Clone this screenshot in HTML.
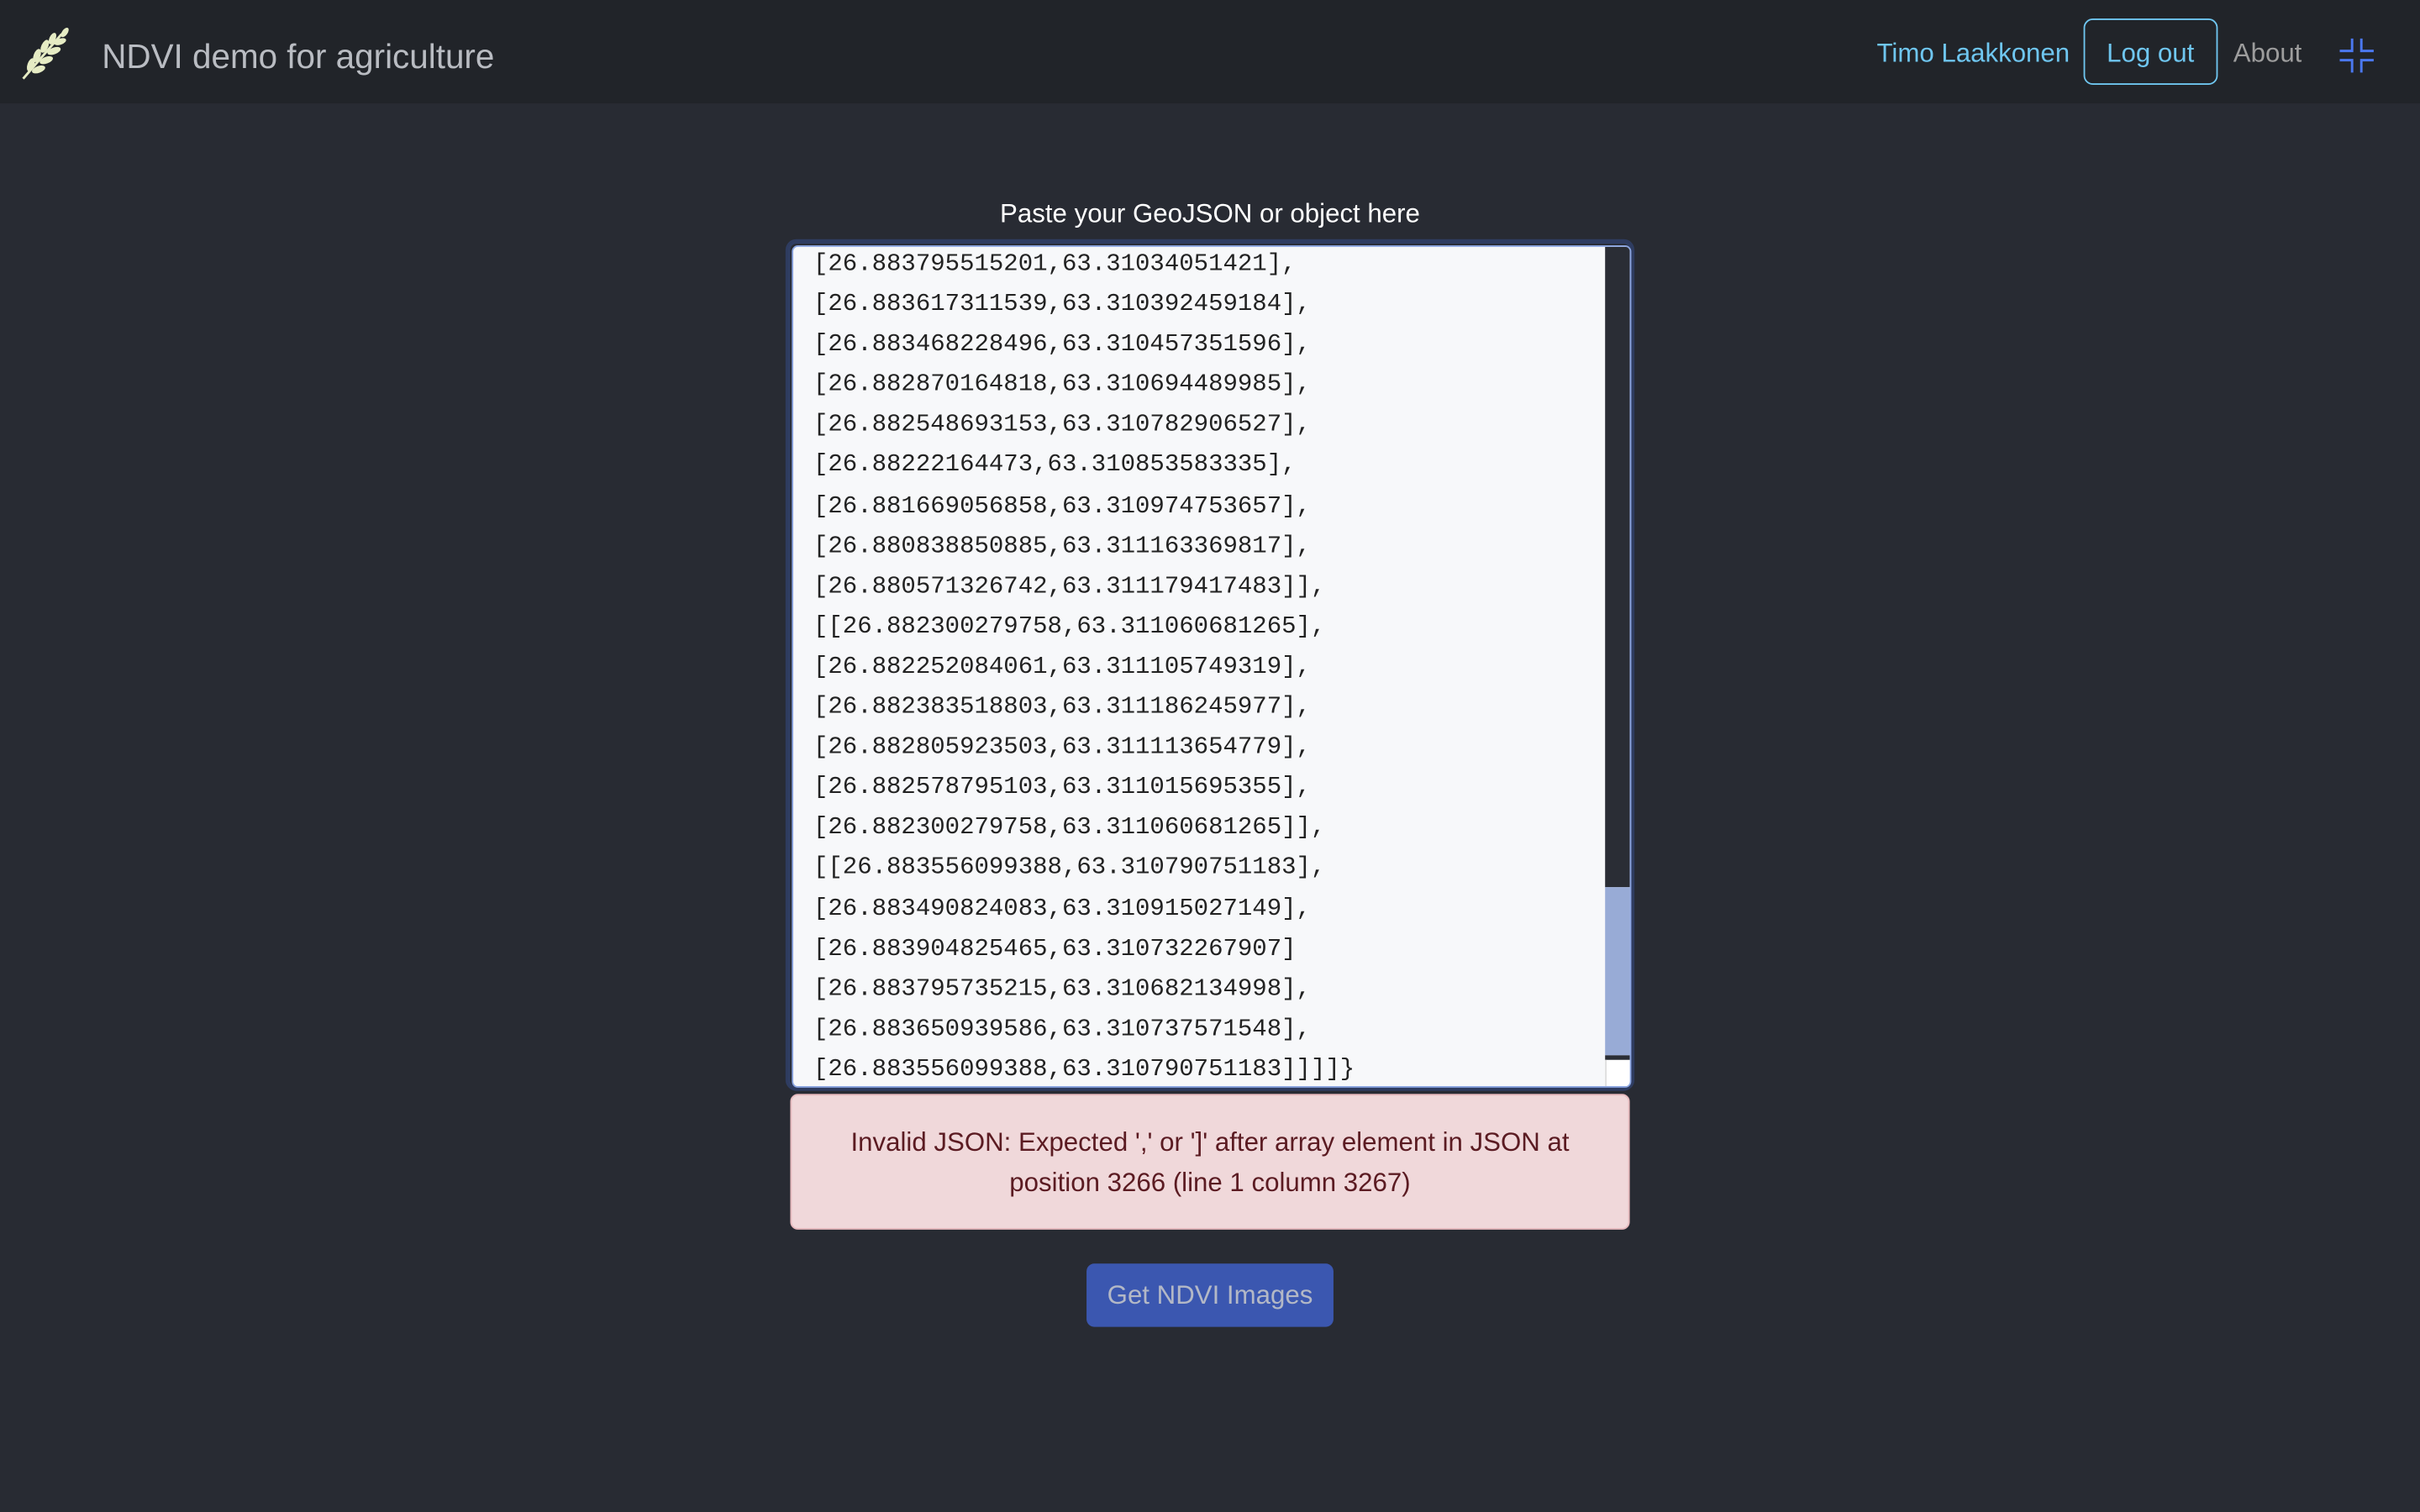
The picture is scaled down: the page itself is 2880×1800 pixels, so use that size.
<!DOCTYPE html>
<html><head><meta charset="utf-8"><style>
html,body{margin:0;padding:0;width:2880px;height:1800px;overflow:hidden;background:#282b33;}
#s{position:absolute;left:0;top:0;width:1568px;height:980px;transform:scale(1.836735);transform-origin:0 0;font-family:"Liberation Sans",sans-serif;}
.nav{position:absolute;left:0;top:0;width:1568px;height:67px;background:#212429;}
.abs{position:absolute;white-space:nowrap;}
.ta{position:absolute;left:510px;top:156px;width:544px;height:546px;border:2px solid #2f3d62;border-radius:6px;box-shadow:0 0 0 1px #2f3d62;}
.inner{position:absolute;left:513px;top:159px;width:542px;height:544px;background:#f7f8fa;border:1px solid #8aa4e0;border-radius:4px;overflow:hidden;}
.code{position:absolute;left:13px;top:-2px;font-family:"Liberation Mono",monospace;font-size:15.8px;line-height:26.1px;color:#222;white-space:pre;}
</style></head><body><div id="s">
<div class="nav">
<svg class="abs" style="left:12px;top:16px" width="36" height="36" viewBox="0 0 36 36"><g fill="#e6ecc4"><path d="M3 35 L28 6" stroke="#e6ecc4" stroke-width="1.6"/><ellipse cx="8" cy="26" rx="2.2" ry="4.5" transform="rotate(20 8 26)"/><ellipse cx="13" cy="29" rx="2.2" ry="4.5" transform="rotate(70 13 29)"/><ellipse cx="12" cy="20" rx="2.2" ry="4.5" transform="rotate(20 12 20)"/><ellipse cx="18" cy="23" rx="2.2" ry="4.5" transform="rotate(70 18 23)"/><ellipse cx="17" cy="14" rx="2.2" ry="4.5" transform="rotate(25 17 14)"/><ellipse cx="23" cy="17" rx="2.2" ry="4.5" transform="rotate(70 23 17)"/><ellipse cx="22" cy="9" rx="2" ry="4" transform="rotate(25 22 9)"/><ellipse cx="27" cy="11" rx="2" ry="4" transform="rotate(70 27 11)"/><ellipse cx="30" cy="5" rx="1.8" ry="3.5" transform="rotate(35 30 5)"/></g></svg>
<div class="abs" style="left:66px;top:24px;font-size:22px;color:#b9bcc2">NDVI demo for agriculture</div>
<div class="abs" style="left:1216px;top:25px;font-size:17px;color:#6fc6f0">Timo Laakkonen</div>
<div class="abs" style="left:1350px;top:12px;width:87px;height:43px;border:1px solid #6fc6f0;border-radius:6px;box-sizing:border-box;"></div>
<div class="abs" style="left:1365px;top:25px;font-size:17px;color:#6fc6f0">Log out</div>
<div class="abs" style="left:1447px;top:25px;font-size:17px;color:#9d9d9d">About</div>
<svg class="abs" style="left:1514px;top:23px" width="26" height="26" viewBox="0 0 26 26" fill="none" stroke="#4b78f0" stroke-width="1.6"><path d="M10 2V10H2M16 2V10H24M10 24V16H2M16 24V16H24"/></svg>
</div>
<div class="abs" style="left:0;width:1568px;text-align:center;top:129px;font-size:17px;color:#fff">Paste your GeoJSON or object here</div>
<div class="ta"></div>
<div class="inner"><div class="code">[26.883795515201,63.31034051421],
[26.883617311539,63.310392459184],
[26.883468228496,63.310457351596],
[26.882870164818,63.310694489985],
[26.882548693153,63.310782906527],
[26.88222164473,63.310853583335],
[26.881669056858,63.310974753657],
[26.880838850885,63.311163369817],
[26.880571326742,63.311179417483]],
[[26.882300279758,63.311060681265],
[26.882252084061,63.311105749319],
[26.882383518803,63.311186245977],
[26.882805923503,63.311113654779],
[26.882578795103,63.311015695355],
[26.882300279758,63.311060681265]],
[[26.883556099388,63.310790751183],
[26.883490824083,63.310915027149],
[26.883904825465,63.310732267907]
[26.883795735215,63.310682134998],
[26.883650939586,63.310737571548],
[26.883556099388,63.310790751183]]]]}</div>
<div class="abs" style="left:526px;top:0;width:16px;height:415px;background:#2a2d35"></div>
<div class="abs" style="left:526px;top:415px;width:16px;height:109px;background:#98abd6"></div>
<div class="abs" style="left:526px;top:524px;width:16px;height:3px;background:#2a2d35"></div>
<div class="abs" style="left:526px;top:527px;width:16px;height:17px;background:#fff;border-left:1px solid #ddd"></div>
</div>
<div class="abs" style="left:512px;top:709px;width:544px;height:88px;background:#f0d8da;border:1px solid #e6b9bd;border-radius:5px;box-sizing:border-box;text-align:center;font-size:17px;line-height:26px;color:#5b1b22;padding-top:18px;white-space:normal">Invalid JSON: Expected ',' or ']' after array element in JSON at<br>position 3266 (line 1 column 3267)</div>
<div class="abs" style="left:704px;top:819px;width:160px;height:41px;background:#3b57b0;border-radius:5px;text-align:center;line-height:42px;font-size:17px;color:#b3b8c6">Get NDVI Images</div>
</div></body></html>
